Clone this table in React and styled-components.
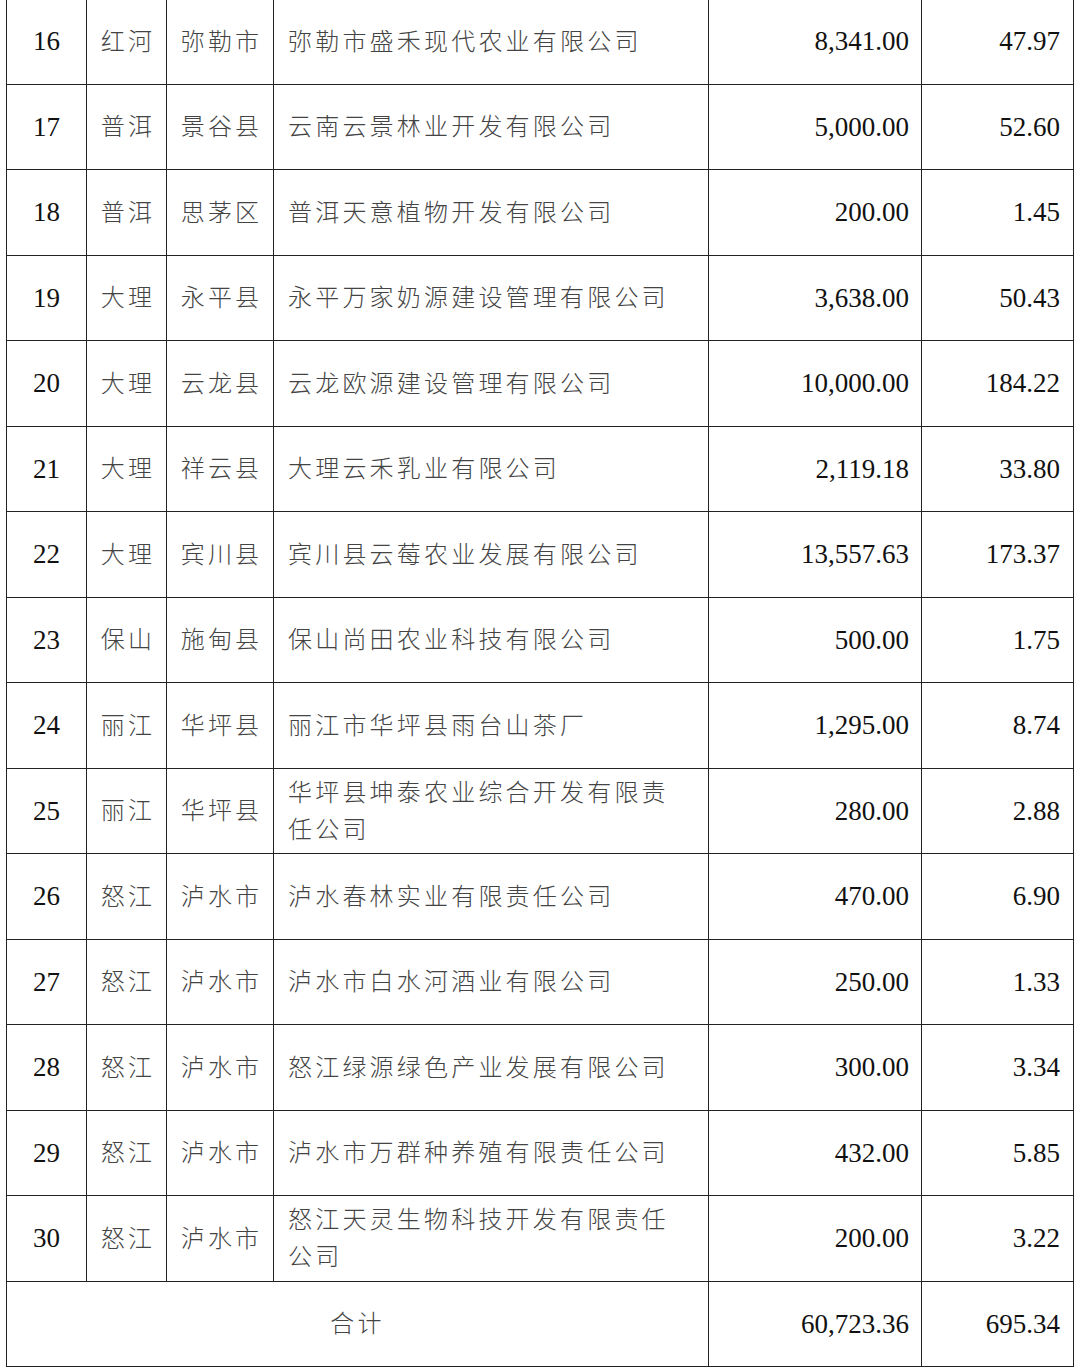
import React from 'react';
import styled, { createGlobalStyle } from 'styled-components';

const GlobalStyle = createGlobalStyle`
  html, body {
    margin: 0;
    padding: 0;
    background: #ffffff;
  }
`;

const rows = [
  ['16', '红河', '弥勒市', '弥勒市盛禾现代农业有限公司', '8,341.00', '47.97'],
  ['17', '普洱', '景谷县', '云南云景林业开发有限公司', '5,000.00', '52.60'],
  ['18', '普洱', '思茅区', '普洱天意植物开发有限公司', '200.00', '1.45'],
  ['19', '大理', '永平县', '永平万家奶源建设管理有限公司', '3,638.00', '50.43'],
  ['20', '大理', '云龙县', '云龙欧源建设管理有限公司', '10,000.00', '184.22'],
  ['21', '大理', '祥云县', '大理云禾乳业有限公司', '2,119.18', '33.80'],
  ['22', '大理', '宾川县', '宾川县云莓农业发展有限公司', '13,557.63', '173.37'],
  ['23', '保山', '施甸县', '保山尚田农业科技有限公司', '500.00', '1.75'],
  ['24', '丽江', '华坪县', '丽江市华坪县雨台山茶厂', '1,295.00', '8.74'],
  ['25', '丽江', '华坪县', '华坪县坤泰农业综合开发有限责任公司', '280.00', '2.88'],
  ['26', '怒江', '泸水市', '泸水春林实业有限责任公司', '470.00', '6.90'],
  ['27', '怒江', '泸水市', '泸水市白水河酒业有限公司', '250.00', '1.33'],
  ['28', '怒江', '泸水市', '怒江绿源绿色产业发展有限公司', '300.00', '3.34'],
  ['29', '怒江', '泸水市', '泸水市万群种养殖有限责任公司', '432.00', '5.85'],
  ['30', '怒江', '泸水市', '怒江天灵生物科技开发有限责任公司', '200.00', '3.22'],
];

const Page = styled.div`
  padding-left: 6px;
  margin-top: -2px;
`;

const Table = styled.div`
  display: grid;
  width: 1068px;
  box-sizing: border-box;
  grid-template-columns: 80px 80px 107px 435px 213px 152px;
  grid-template-rows: repeat(8, 86px 85px);
  border-left: 1px solid #222;
  border-top: 1px solid #222;
`;

const Cell = styled.div`
  box-sizing: border-box;
  border-right: 1px solid #222;
  border-bottom: 1px solid #222;
  display: flex;
  align-items: center;
  grid-column: ${(p) => (p.$span ? `span ${p.$span}` : 'auto')};
`;

const IndexCell = styled(Cell)`
  justify-content: center;
  font-family: "Liberation Serif", "Times New Roman", serif;
  font-size: 27px;
  color: #111;
`;

const RegionCell = styled(Cell)`
  justify-content: center;
  padding: 0 0 5px 3px;
  font-family: "Noto Sans CJK SC", sans-serif;
  font-weight: 300;
  font-size: 24px;
  letter-spacing: 3.2px;
  color: #444;
`;

const CompanyCell = styled(Cell)`
  padding: 0 20px 5px 14px;
  font-family: "Noto Sans CJK SC", sans-serif;
  font-weight: 300;
  font-size: 24px;
  line-height: 37px;
  letter-spacing: 3.2px;
  color: #444;
`;

const AmountCell = styled(Cell)`
  justify-content: flex-end;
  padding-right: ${(p) => p.$pad}px;
  font-family: "Liberation Serif", "Times New Roman", serif;
  font-size: 27px;
  color: #111;
`;

const TotalLabel = styled(Cell)`
  justify-content: center;
  padding-bottom: 5px;
  font-family: "Noto Sans CJK SC", sans-serif;
  font-weight: 300;
  font-size: 24px;
  letter-spacing: 3.2px;
  color: #444;
`;

export default function App() {
  return (
    <Page>
      <GlobalStyle />
      <Table>
        {rows.map(([no, city, county, company, invest, subsidy]) => (
          <React.Fragment key={no}>
            <IndexCell>{no}</IndexCell>
            <RegionCell>{city}</RegionCell>
            <RegionCell>{county}</RegionCell>
            <CompanyCell>{company}</CompanyCell>
            <AmountCell $pad={12}>{invest}</AmountCell>
            <AmountCell $pad={13}>{subsidy}</AmountCell>
          </React.Fragment>
        ))}
        <TotalLabel $span={4}>合计</TotalLabel>
        <AmountCell $pad={12}>60,723.36</AmountCell>
        <AmountCell $pad={13}>695.34</AmountCell>
      </Table>
    </Page>
  );
}
